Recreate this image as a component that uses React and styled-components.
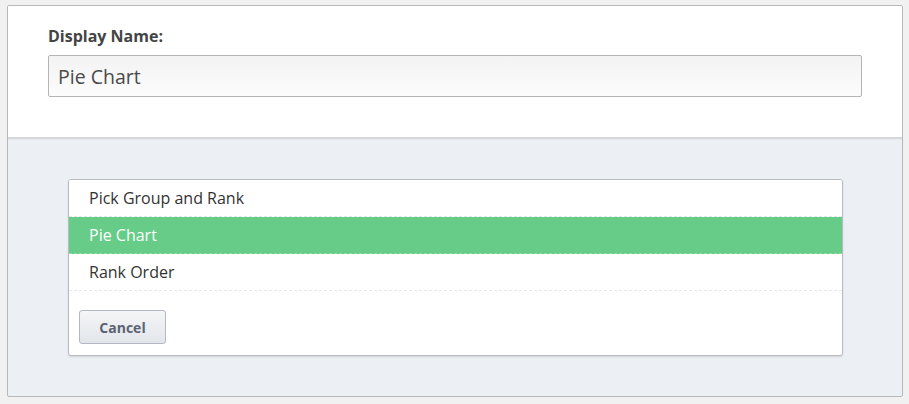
import React from 'react';
import styled, { createGlobalStyle } from 'styled-components';

const GlobalStyle = createGlobalStyle`
    html, body { background: #f1f1f1; }
    body {
        margin: 5px 6px 0 7px;
        font-family: "Open Sans", "Noto Sans", sans-serif;
        color: #333;
    }
    * { box-sizing: border-box; }
`;

const Panel = styled.section`
    border: 1px solid #b8b8b8;
    border-radius: 2px;
    background: #eceff3;
    height: 392px;
    overflow: hidden;
    display: flex; flex-direction: column;
`;

const NameSection = styled.div`
    background: #fff;
    padding: 19px 40px 40px 40px;
    box-shadow: 0 1px 1px rgba(0,0,0,0.1);
    border-bottom: 1px solid #d4d6d9;
    display: flex; flex-direction: column; gap: 8px;
`;

const Label = styled.label`
    font-weight: 700; font-size: 16px;
    color: #444;
    line-height: 22px;
`;

const NameInput = styled.input`
    height: 42px; width: 100%;
    border: 1px solid #b4b4b4;
    border-radius: 2px;
    background: linear-gradient(#f3f3f3, #fcfcfc);
    padding: 0 9px;
    font-family: inherit; font-size: 19.5px;
    color: #4a4a4a;
    outline: none;
`;

const PickerArea = styled.div`
    flex: 1;
    padding: 41px 59px 40px 60px;
`;

const OptionList = styled.div`
    background: #fff;
    border: 1px solid #b9bcc1;
    border-radius: 3px;
    box-shadow: 0 1px 2px rgba(0,0,0,0.12);
    overflow: hidden;
`;

const Option = styled.div`
    height: 37px;
    padding: 0 20px;
    display: flex; align-items: center;
    font-size: 16px;
    color: ${({ $active }) => $active ? '#fff' : '#333'};
    background: ${({ $active }) => $active ? '#66cc88' : '#fff'};
    border-bottom: 1px dashed ${({ $active }) => $active ? '#8fdaa8' : '#e6e7ea'};
`;

const Footer = styled.div`
    padding: 19px 10px 11px;
`;

const CancelButton = styled.button`
    width: 87px; height: 34px;
    border: 1px solid #b3b8c2;
    border-radius: 3px;
    background: linear-gradient(#f4f5f7, #e2e5ea);
    font-family: inherit; font-weight: 700; font-size: 14px;
    color: #5b6373;
    cursor: pointer;
`;

const options = ['Pick Group and Rank', 'Pie Chart', 'Rank Order'];

const App = () => {
    const selected = 'Pie Chart';

    return (
        <>
            <GlobalStyle />
            <Panel>
                <NameSection>
                    <Label>Display Name:</Label>
                    <NameInput defaultValue="Pie Chart" />
                </NameSection>
                <PickerArea>
                    <OptionList>
                        {options.map(o => (
                            <Option key={o} $active={o === selected}>{o}</Option>
                        ))}
                        <Footer>
                            <CancelButton>Cancel</CancelButton>
                        </Footer>
                    </OptionList>
                </PickerArea>
            </Panel>
        </>
    );
};

export default App;
